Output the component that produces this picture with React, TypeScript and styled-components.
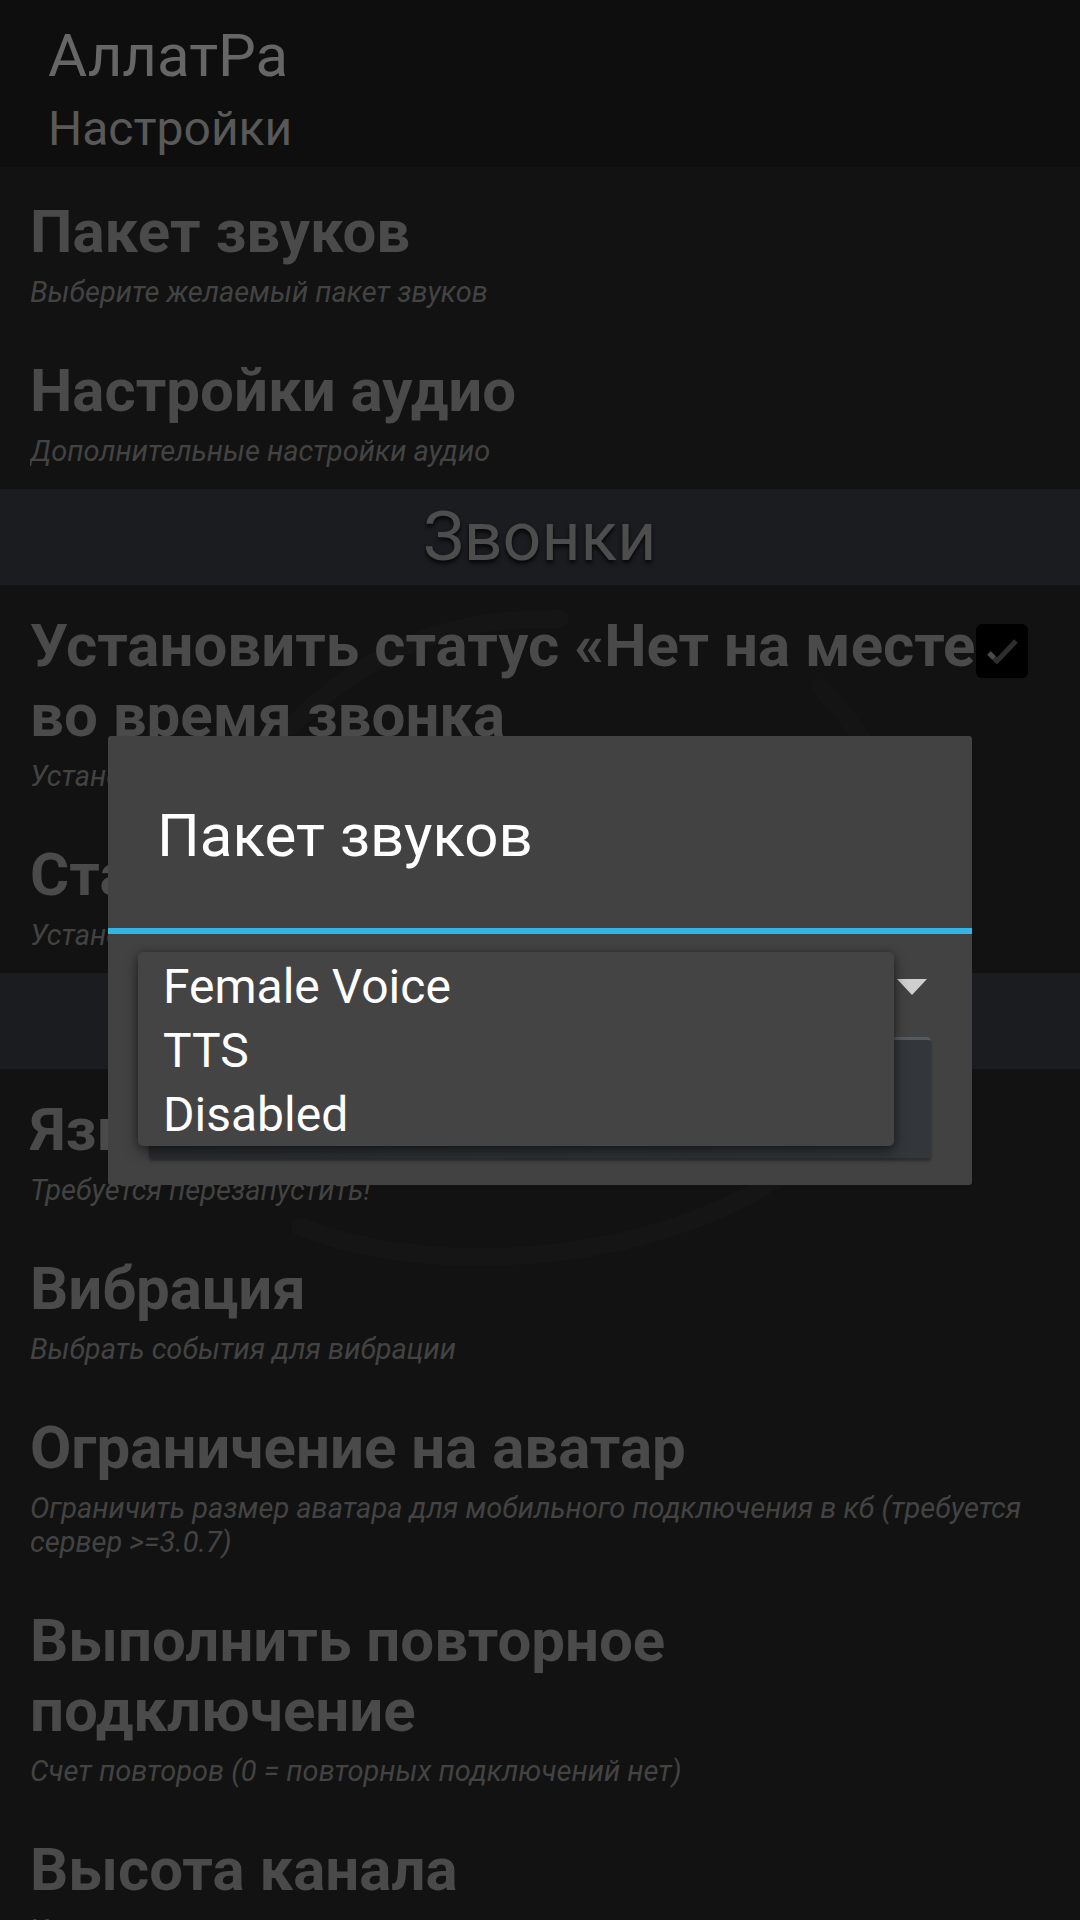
import styled, { createGlobalStyle } from "styled-components";

const GlobalStyle = createGlobalStyle`
  html, body {
    margin: 0;
    padding: 0;
    background: #121212;
  }
  body {
    font-family: Roboto, "Noto Sans", "DejaVu Sans", sans-serif;
  }
  * {
    box-sizing: border-box;
  }
`;

const Screen = styled.div`
  position: relative;
  width: 1080px;
  height: 1920px;
  overflow: hidden;
  background: #121212;
`;

// faint logo ring behind the preference list
const Watermark = styled.svg`
  position: absolute;
  left: 0;
  top: 0;
  width: 1080px;
  height: 1753px;
  pointer-events: none;
  z-index: 0;
`;

const Header = styled.header`
  display: flex;
  flex-direction: column;
  gap: 9px;
  height: 167px;
  padding: 20px 0 0 48px;
  background: #0e0e0e;
`;

const AppName = styled.div`
  font-size: 60px;
  line-height: normal;
  color: #666666;
`;

const ScreenName = styled.div`
  font-size: 48px;
  line-height: normal;
  color: #595959;
`;

const List = styled.div`
  position: relative;
  display: flex;
  flex-direction: column;
  padding-top: 4px;
  & > div {
    position: relative;
    z-index: 1;
  }
`;

const Item = styled.div`
  display: flex;
  align-items: flex-start;
  padding: 26px 30px 21px 30px;
`;

const Texts = styled.div`
  flex: 1;
  min-width: 0;
  display: flex;
  flex-direction: column;
  gap: 8px;
  overflow: hidden;
`;

const Title = styled.div`
  font-size: 60px;
  font-weight: 700;
  line-height: 70px;
  color: #4a4a4a;
`;

const Line = styled.span`
  display: block;
  white-space: nowrap;
`;

const Summary = styled.div`
  font-size: 29px;
  font-style: italic;
  line-height: 34px;
  color: #434343;
`;

const Section = styled.div`
  display: flex;
  align-items: center;
  justify-content: center;
  height: 96px;
  background: #1b1c20;
  font-size: 68px;
  color: #4d4d4d;
  text-shadow: 0 3px 4px rgba(0, 0, 0, 0.8);
`;

const Check = styled.div`
  flex: none;
  width: 52px;
  height: 54px;
  margin: 13px 22px 0 0;
  border-radius: 6px;
  background: #000000;
  display: flex;
  align-items: center;
  justify-content: center;
`;

const Overlay = styled.div`
  position: fixed;
  inset: 0;
  z-index: 2;
  display: flex;
  align-items: center;
  justify-content: center;
`;

const Dialog = styled.div`
  width: 864px;
  height: 449px;
  display: flex;
  flex-direction: column;
  background: #424242;
  border-radius: 3px;
`;

const DialogTitle = styled.div`
  height: 192px;
  padding: 64px 0 0 49px;
  font-size: 60px;
  line-height: normal;
  color: #ffffff;
`;

const Divider = styled.div`
  height: 6px;
  background: #33b5e5;
`;

const DialogBody = styled.div`
  position: relative;
  flex: 1;
  display: flex;
  flex-direction: column;
  padding: 0 41px 27px 41px;
`;

const SpinnerRow = styled.div`
  height: 103px;
  display: flex;
  justify-content: flex-end;
  padding: 45px 4px 0 0;
`;

const Arrow = styled.div`
  width: 0;
  height: 0;
  border-left: 15px solid transparent;
  border-right: 15px solid transparent;
  border-top: 16px solid #cfcfcf;
`;

const Field = styled.div`
  flex: 1;
  border-radius: 4px;
  border-top: 3px solid #555a5e;
  background: linear-gradient(90deg, #2a2d30, #33373b);
  box-shadow: 0 3px 3px rgba(0, 0, 0, 0.35);
`;

const Popup = styled.div`
  position: absolute;
  left: 30px;
  top: 18px;
  width: 756px;
  display: flex;
  flex-direction: column;
  padding: 3px 0 0 25px;
  height: 194px;
  background: #444444;
  border-radius: 5px;
  box-shadow: 0 6px 14px rgba(0, 0, 0, 0.45), 0 0 6px rgba(0, 0, 0, 0.25);
`;

const Option = styled.div`
  font-size: 48px;
  line-height: 64px;
  color: #ffffff;
`;

type Pref = {
  title: string[];
  summary: string[];
  checked?: boolean;
};

const Row = ({ title, summary, checked }: Pref) => (
  <Item>
    <Texts>
      <Title>
        {title.map((t) => (
          <Line key={t}>{t}</Line>
        ))}
      </Title>
      <Summary>
        {summary.map((s) => (
          <Line key={s}>{s}</Line>
        ))}
      </Summary>
    </Texts>
    {checked ? (
      <Check>
        <svg width="38" height="32" viewBox="0 0 38 32">
          <path d="M6 18 L14 26 L33 6" fill="none" stroke="#2e2e2e" strokeWidth="5" />
          <path d="M6 18 L11 23" fill="none" stroke="#4a4a4a" strokeWidth="5" />
        </svg>
      </Check>
    ) : null}
  </Item>
);

function App() {
  return (
    <>
      <GlobalStyle />
      <Screen>
        <Header>
          <AppName>АллатРа</AppName>
          <ScreenName>Настройки</ScreenName>
        </Header>
        <List>
          <Watermark viewBox="0 0 1080 1753">
            <g fill="none" strokeWidth="18" strokeLinecap="round">
              <path d="M290 560 C 380 470, 470 450, 560 452" stroke="#151515" />
              <path d="M300 1060 C 430 1110, 640 1100, 780 1010" stroke="#151515" />
              <path d="M820 520 C 900 600, 930 720, 900 830" stroke="#141414" />
            </g>
          </Watermark>
          <Row title={["Пакет звуков"]} summary={["Выберите желаемый пакет звуков"]} />
          <Row title={["Настройки аудио"]} summary={["Дополнительные настройки аудио"]} />
          <Section>Звонки</Section>
          <Row
            title={["Установить статус «Нет на месте»", "во время звонка"]}
            summary={["Установить статус «Нет на месте» во время звонка"]}
            checked
          />
          <Row title={["Статус во время звонка"]} summary={["Установить текст статуса"]} />
          <Section>Общие</Section>
          <Row title={["Язык"]} summary={["Требуется перезапустить!"]} />
          <Row title={["Вибрация"]} summary={["Выбрать события для вибрации"]} />
          <Row
            title={["Ограничение на аватар"]}
            summary={[
              "Ограничить размер аватара для мобильного подключения в кб (требуется",
              "сервер >=3.0.7)",
            ]}
          />
          <Row
            title={["Выполнить повторное", "подключение"]}
            summary={["Счет повторов (0 = повторных подключений нет)"]}
          />
          <Row title={["Высота канала"]} summary={["Установить высоту строки канала"]} />
        </List>
        <Overlay>
          <Dialog>
            <DialogTitle>Пакет звуков</DialogTitle>
            <Divider />
            <DialogBody>
              <SpinnerRow>
                <Arrow />
              </SpinnerRow>
              <Field />
              <Popup>
                <Option>Female Voice</Option>
                <Option>TTS</Option>
                <Option>Disabled</Option>
              </Popup>
            </DialogBody>
          </Dialog>
        </Overlay>
      </Screen>
    </>
  );
}

export default App;
